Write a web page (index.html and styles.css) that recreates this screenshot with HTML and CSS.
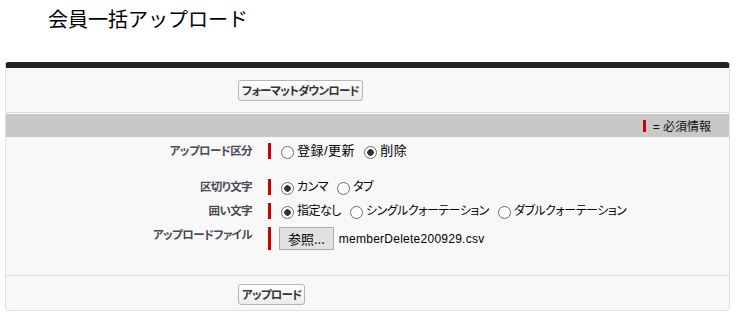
FILE: index.html
```html
<!DOCTYPE html>
<html lang="ja">
<head>
    <meta charset="UTF-8">
    <meta name="viewport" content="width=device-width, initial-scale=1.0">
    <title>会員一括アップロード</title>
    <link rel="stylesheet" href="styles.css">
</head>
<body>
    <h1 class="page-title">会員一括アップロード</h1>
    <div class="panel">
        <div class="button-row">
            <button type="button" class="btn">フォーマットダウンロード</button>
        </div>
        <div class="section-bar">
            <span class="required-mark"></span>
            <span class="legend">= 必須情報</span>
        </div>
        <form class="form-body" id="uploadForm">
            <div class="form-row first">
                <label class="form-label">アップロード区分</label>
                <div class="form-data">
                    <label class="opt kanji"><input type="radio" name="kind">登録/更新</label>
                    <label class="opt kanji"><input type="radio" name="kind" checked>削除</label>
                </div>
            </div>
            <div class="form-row">
                <label class="form-label">区切り文字</label>
                <div class="form-data">
                    <label class="opt"><input type="radio" name="sep" checked>カンマ</label>
                    <label class="opt"><input type="radio" name="sep">タブ</label>
                </div>
            </div>
            <div class="form-row">
                <label class="form-label">囲い文字</label>
                <div class="form-data">
                    <label class="opt"><input type="radio" name="quote" checked>指定なし</label>
                    <label class="opt"><input type="radio" name="quote">シングルクォーテーション</label>
                    <label class="opt"><input type="radio" name="quote">ダブルクォーテーション</label>
                </div>
            </div>
            <div class="form-row">
                <label class="form-label">アップロードファイル</label>
                <div class="form-data file">
                    <button type="button" class="file-btn">参照...</button>
                    <span class="file-name">memberDelete200929.csv</span>
                </div>
            </div>
        </form>
        <div class="button-row bottom">
            <button type="submit" class="btn" form="uploadForm">アップロード</button>
        </div>
    </div>
</body>
</html>
```

FILE: styles.css
```css
body { margin: 0; font-family: "Liberation Sans", "Noto Sans CJK JP", sans-serif; font-size: 12px; color: #000; background: #fff; font-feature-settings: "palt"; }
.page-title { margin: 0; padding: 5px 0 0 48px; height: 62px; box-sizing: border-box; font-family: "Noto Sans CJK JP", sans-serif; font-size: 20px; font-weight: normal; line-height: 28px; font-feature-settings: normal; }
.panel { margin: 0 6px 0 5px; background: #f8f8f8; border: 1px solid #e0e0e0; border-top: 6px solid #222; border-radius: 4px; }
.button-row { padding: 12px 0 11px 232px; border-bottom: 1px solid #dbdbdb; }
.button-row.bottom { padding: 8px 0 5px 232px; border-bottom: none; border-top: 1px solid #dbdbdb; }
.btn { height: 21px; padding: 0 3px; font-family: "Noto Sans CJK JP", sans-serif; font-size: 11.5px; font-weight: bold; letter-spacing: -0.8px; line-height: 17px; color: #333; background: linear-gradient(#fff, #ececec); border: 1px solid #b5b5b5; border-radius: 3px; cursor: pointer; font-feature-settings: "palt"; }
.section-bar { display: flex; justify-content: flex-end; align-items: center; gap: 7px; height: 23px; margin-top: 1px; padding-right: 18px; background: #c8c8c8; }
.required-mark { width: 3px; height: 12px; background: #c00; }
.legend { font-size: 12px; color: #111; }
.form-body { display: flex; flex-direction: column; gap: 8px; padding: 6px 0 25px; }
.form-row { display: flex; }
.form-row.first { margin-bottom: 12px; }
.form-label { width: 256px; padding-right: 10px; box-sizing: border-box; text-align: right; font-family: "Noto Sans CJK JP", sans-serif; font-size: 11.5px; font-weight: bold; letter-spacing: -0.6px; color: #4a4a56; line-height: 14px; }
.form-data { display: flex; align-items: flex-end; gap: 9px; min-height: 16px; margin-left: 6px; padding-left: 10px; border-left: 3px solid #c00; }
.form-data.file { align-items: center; gap: 5px; }
.opt { display: flex; align-items: flex-end; gap: 3px; line-height: 16px; letter-spacing: -0.5px; }
.opt.kanji { font-size: 13px; letter-spacing: 0.5px; }
.opt input { appearance: none; width: 13px; height: 13px; margin: 0; border: 1px solid #6b6b6b; border-radius: 50%; background: #fff; }
.opt input:checked { background: radial-gradient(circle, #333 0 3px, #fff 3.5px); }
.file-btn { height: 23px; padding: 0 8px; margin-left: -2px; font-family: "Noto Sans CJK JP", sans-serif; font-size: 13px; color: #000; background: #e1e1e1; border: 1px solid #adadad; font-feature-settings: "palt"; }
.file-name { font-size: 12px; letter-spacing: 0.25px; }
```
